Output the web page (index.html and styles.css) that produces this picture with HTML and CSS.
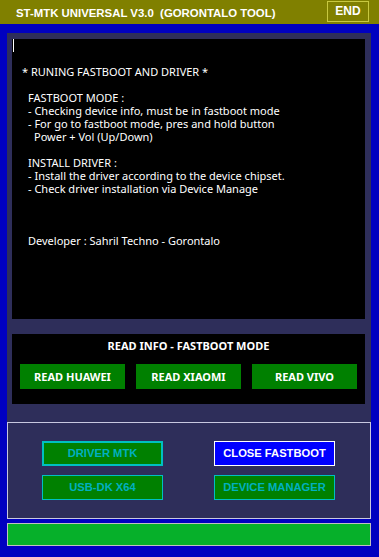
FILE: index.html
```html
<!DOCTYPE html>
<html>
<head>
<meta charset="utf-8">
<link rel="stylesheet" href="styles.css">
</head>
<body>
<div class="header">
  <div class="title">ST-MTK UNIVERSAL V3.0&nbsp;&nbsp;(GORONTALO TOOL)</div>
  <div class="end">END</div>
</div>
<div class="panel">
  <div class="console">
    <div class="line caretline"><span class="caret"></span></div>
    <div class="line"></div>
    <div class="line">* RUNING FASTBOOT AND DRIVER *</div>
    <div class="line"></div>
    <div class="line i1">FASTBOOT MODE :</div>
    <div class="line i1">- Checking device info, must be in fastboot mode</div>
    <div class="line i1">- For go to fastboot mode, pres and hold button</div>
    <div class="line i2">Power + Vol (Up/Down)</div>
    <div class="line"></div>
    <div class="line i1">INSTALL DRIVER :</div>
    <div class="line i1">- Install the driver according to the device chipset.</div>
    <div class="line i1">- Check driver installation via Device Manage</div>
    <div class="line"></div>
    <div class="line"></div>
    <div class="line"></div>
    <div class="line i1">Developer : Sahril Techno - Gorontalo</div>
  </div>
  <div class="readinfo">
    <div class="ri-title">READ INFO - FASTBOOT MODE</div>
    <div class="ri-buttons">
      <div class="gbtn">READ HUAWEI</div>
      <div class="gbtn">READ XIAOMI</div>
      <div class="gbtn">READ VIVO</div>
    </div>
  </div>
</div>
<div class="lower">
  <div class="lgrid">
    <div class="lbtn focus">DRIVER MTK</div>
    <div class="lbtn blue">CLOSE FASTBOOT</div>
    <div class="lbtn">USB-DK X64</div>
    <div class="lbtn">DEVICE MANAGER</div>
  </div>
</div>
<div class="progress"></div>
</body>
</html>
```
FILE: styles.css
```css
html, body {
  margin: 0;
  padding: 0;
}
body {
  width: 379px;
  height: 557px;
  background: #0000c0;
  font-family: "Liberation Sans", Arial, sans-serif;
  overflow: hidden;
}
.header {
  height: 24px;
  background: #808000;
  display: flex;
  align-items: flex-start;
}
.title {
  color: #fff;
  font-weight: bold;
  font-size: 11.4px;
  line-height: 14px;
  padding-left: 16px;
  padding-top: 6px;
}
.end {
  margin-left: auto;
  margin-right: 10px;
  margin-top: 1px;
  width: 40px;
  height: 19px;
  border: 1px solid #c8c840;
  color: #fff;
  font-weight: bold;
  font-size: 12px;
  line-height: 19px;
  text-align: center;
}
.panel {
  margin: 9px 8px 0 7px;
  background: #2e2e5a;
  padding: 6px 6px 18px 5px;
  display: flex;
  flex-direction: column;
  gap: 15px;
}
.console {
  height: 280px;
  background: #000;
  color: #fff;
  font-family: "Noto Sans", "DejaVu Sans", sans-serif;
  font-size: 11px;
  padding-left: 10px;
  position: relative;
}
.line {
  height: 13px;
  line-height: 13px;
  white-space: pre;
}
.i1 { padding-left: 6px; }
.i2 { padding-left: 12px; }
.caret {
  position: absolute;
  left: 1px;
  top: 0;
  width: 1px;
  height: 13px;
  background: #fff;
}
.readinfo {
  height: 70px;
  background: #000;
  padding: 0 8px;
  box-sizing: border-box;
}
.ri-title {
  color: #fff;
  font-family: "Noto Sans", "DejaVu Sans", sans-serif;
  font-weight: bold;
  font-size: 11px;
  text-align: center;
  line-height: 14px;
  padding-top: 5px;
  height: 30px;
  box-sizing: border-box;
}
.ri-buttons {
  display: flex;
  gap: 11px;
}
.gbtn {
  width: 105px;
  height: 25px;
  background: #008000;
  color: #fff;
  font-family: "Noto Sans", "DejaVu Sans", sans-serif;
  font-weight: bold;
  font-size: 11px;
  line-height: 25px;
  text-align: center;
}
.lower {
  margin: 0 8px 0 7px;
  border: 1px solid #c8c8e0;
  background: #2e2e5a;
  padding-top: 18px;
  box-sizing: content-box;
  height: 77px;
}
.lgrid {
  display: grid;
  grid-template-columns: 121px 121px;
  column-gap: 51px;
  row-gap: 9px;
  padding-left: 34px;
}
.lbtn {
  height: 25px;
  box-sizing: border-box;
  border: 1px solid #00c0c0;
  background: #008000;
  color: #00b0c0;
  font-weight: bold;
  font-size: 11.2px;
  line-height: 23px;
  text-align: center;
}
.lbtn.focus {
  border-width: 2px;
  line-height: 21px;
}
.lbtn.blue {
  background: #0000ff;
  border-color: #fff;
  color: #fff;
}
.progress {
  margin: 4px 8px 0 7px;
  height: 21px;
  background: #06b02a;
  border: 1px solid #c0c0c0;
}
```
